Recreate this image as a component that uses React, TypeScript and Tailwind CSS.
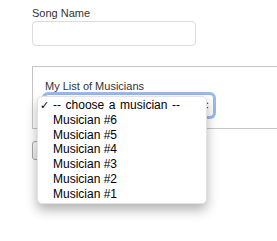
const MUSICIANS = ['Musician #6', 'Musician #5', 'Musician #4', 'Musician #3', 'Musician #2', 'Musician #1']

export default function App() {
  return (
    <div className="relative w-[277px] h-[241px] overflow-hidden bg-white font-['Liberation_Sans',Arial,sans-serif]">
      <div className="pl-[32px] pt-[7px]">
        {/* Song name */}
        <label className="block text-[11px] leading-[13px] text-[#333]">Song Name</label>
        <input
          type="text"
          className="block mt-[1px] w-[164px] h-[25px] border border-[#dcdcdc] rounded-[4px] bg-white outline-none"
        />

        {/* Musicians box */}
        <div className="mt-[20px] w-[270px] border border-[#c6c6c6] pt-[13px] pl-[12px] pb-[11px]">
          <label className="block text-[11px] leading-[13px] text-[#333]">My List of Musicians</label>
          <div className="mt-[1px] -ml-[1px] w-[170px] h-[23px] border border-[#9bb6dc] rounded-[4px] bg-white shadow-[0_0_0_2px_rgba(120,165,230,0.75)] flex items-center justify-end pr-[4px]">
            <svg width="6" height="11" viewBox="0 0 6 11" className="text-[#444]">
              <path d="M0.5 4 L3 1 L5.5 4 Z" fill="currentColor" />
              <path d="M0.5 7 L3 10 L5.5 7 Z" fill="currentColor" />
            </svg>
          </div>
        </div>

        {/* Button behind the menu (covered) */}
        <div className="mt-[12px] w-[70px] h-[19px] border border-[#a9a9a9] rounded-[3px] bg-gradient-to-b from-[#fdfdfd] to-[#ececec]" />
      </div>

      {/* Open select menu */}
      <div className="absolute left-[37px] top-[96px] w-[170px] h-[108px] bg-white rounded-[5px] border border-[#e2e2e2] shadow-[0_6px_12px_rgba(0,0,0,0.3)] pt-[1px] text-[12px] leading-[14.8px] text-black">
        <div className="flex">
          <span className="w-[15px] pl-[2px] text-[11px]">✓</span>
          <span className="[word-spacing:1.25px] whitespace-pre">-- choose a musician --</span>
        </div>
        {MUSICIANS.map((m) => (
          <div key={m} className="pl-[15px] whitespace-pre">
            {m}
          </div>
        ))}
      </div>
    </div>
  )
}
